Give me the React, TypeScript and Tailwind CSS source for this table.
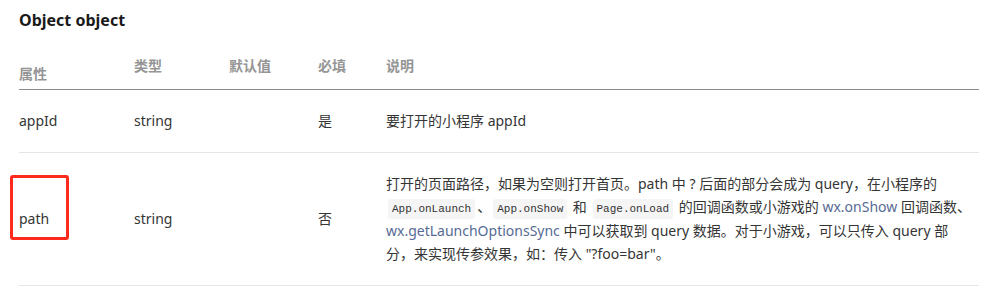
const font = "font-['Noto_Sans','Noto_Sans_CJK_SC',sans-serif]";

function Code({ children }: { children: string }) {
  return (
    <code className="mx-[2px] rounded-[3px] bg-[#f5f5f5] px-[4px] py-[4px] font-['Liberation_Mono',monospace] text-[11px] text-[#333]">
      {children}
    </code>
  );
}

function Link({ children }: { children: string }) {
  return <span className="text-[#576b95]">{children}</span>;
}

export default function App() {
  return (
    <div className={`${font} min-h-[289px] bg-white px-[19px] pt-[8px] text-[14px] text-[#353535]`}>
      <h3 className="text-[16px] font-bold leading-[24px] text-[#1a1a1a]">
        Object object
      </h3>

      <table className="mt-[14px] w-[960px] table-fixed border-collapse text-left leading-[22.5px]">
        <colgroup>
          <col className="w-[115px]" />
          <col className="w-[95px]" />
          <col className="w-[89px]" />
          <col className="w-[68px]" />
          <col />
        </colgroup>
        <thead>
          <tr className="border-b border-[#8a8a8a] text-[#959595]">
            <th className="pt-[17px] pb-[3px] font-semibold">属性</th>
            <th className="pb-[3px] font-semibold">类型</th>
            <th className="pb-[3px] font-semibold">默认值</th>
            <th className="pb-[3px] font-semibold">必填</th>
            <th className="pb-[3px] font-semibold">说明</th>
          </tr>
        </thead>
        <tbody>
          <tr className="border-b border-[#e5e5e5]">
            <td className="py-[20px]">appId</td>
            <td className="py-[20px]">string</td>
            <td className="py-[20px]"></td>
            <td className="py-[20px]">是</td>
            <td className="py-[20px]">要打开的小程序 appId</td>
          </tr>
          <tr className="border-b border-[#e5e5e5]">
            <td className="relative py-[20px]">
              path
              <span className="absolute top-[22px] left-[-9px] h-[65px] w-[59px] rounded-[3px] border-[3px] border-[#fe2a1c]" />
            </td>
            <td className="py-[20px]">string</td>
            <td className="py-[20px]"></td>
            <td className="py-[20px]">否</td>
            <td className="py-[20px] pr-[6px]">
              打开的页面路径，如果为空则打开首页。path 中 ? 后面的部分会成为 query，在小程序的{" "}
              <Code>App.onLaunch</Code>、<Code>App.onShow</Code> 和{" "}
              <Code>Page.onLoad</Code> 的回调函数或小游戏的{" "}
              <Link>wx.onShow</Link> 回调函数、
              <Link>wx.getLaunchOptionsSync</Link> 中可以获取到 query
              数据。对于小游戏，可以只传入 query 部分，来实现传参效果，如：传入
              "?foo=bar"。
            </td>
          </tr>
        </tbody>
      </table>
    </div>
  );
}
